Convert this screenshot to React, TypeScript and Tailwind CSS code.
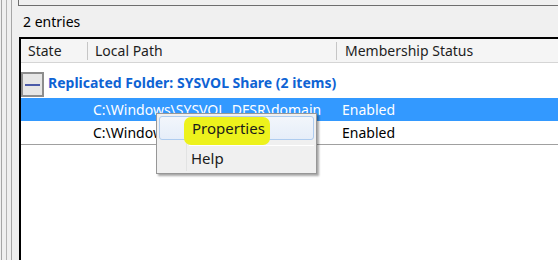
import React from "react"

const font = { fontFamily: '"Noto Sans", "Open Sans", sans-serif' }

function LeftRails() {
  return (
    <div className="flex h-full w-[18px] shrink-0">
      <span className="ml-[1px] w-px h-full bg-[#a6a6a6]" />
      <span className="ml-[4px] w-px h-full bg-[#b4b4b4]" />
      <span className="ml-[4px] w-px h-full bg-[#a6a6a6]" />
    </div>
  )
}

function ContextMenu() {
  return (
    <div className="absolute left-[156px] top-[113px] w-[161px] h-[61px] bg-[#f0f0f0] border border-[#979797] shadow-[2px_2px_2px_rgba(0,0,0,0.35)]">
      <div className="absolute left-[29px] top-[2px] bottom-[2px] w-px bg-[#e2e3e3]" />
      <div className="flex flex-col pt-[2px] px-[2px]">
        <div className="relative h-[24px] rounded-[3px] border border-[#aeccef] bg-gradient-to-b from-[#f2f6fb] to-[#e6eef9] flex items-center">
          <div className="absolute left-[24px] top-[0px] w-[86px] h-[28px] rounded-[7px] bg-[#edf21c]" />
          <span className="relative pl-[32px] text-[15px] text-[#1b1b1b]">Properties</span>
        </div>
        <div className="ml-[30px] mt-[5px] h-px bg-[#d7d7d7] border-b border-white" />
        <div className="h-[25px] flex items-center">
          <span className="pl-[32px] text-[15px] text-[#1b1b1b]">Help</span>
        </div>
      </div>
    </div>
  )
}

export default function App() {
  return (
    <div className="relative w-[558px] h-[260px] overflow-hidden bg-[#f0f0f0] flex" style={font}>
      <LeftRails />
      <div className="flex-1 flex flex-col">
        <div className="h-[6px] border-l border-b border-[#6e6e6e]" />
        <div className="h-[31px] pl-[5px] flex items-center text-[14px] text-black">2 entries</div>
        <div className="flex-1 ml-px border-t-2 border-l-2 border-black bg-white flex flex-col">
          <div className="h-[24px] flex items-center bg-[#f5f5f5] border-b border-[#d5d5d5] text-[14px] text-[#1e1e1e]">
            <div className="w-[67px] h-[18px] pl-[7px] border-r border-[#c6c6c6] flex items-center">State</div>
            <div className="w-[249px] h-[18px] pl-[7px] border-r border-[#c6c6c6] flex items-center">Local Path</div>
            <div className="pl-[8px] flex items-center">Membership Status</div>
          </div>
          <div className="h-[35px] flex items-end pb-[1px]">
            <div className="w-[23px] h-[25px] border-2 border-[#8d8d8d] bg-[#e6e6e6] flex items-center justify-center">
              <span className="w-[15px] h-[2px] bg-[#4a5aa8]" />
            </div>
            <span className="ml-[4px] mb-[4px] text-[14px] font-bold text-[#0e63d4]">Replicated Folder: SYSVOL Share (2 items)</span>
          </div>
          <div className="h-[23px] flex items-center bg-[#3399ff] text-white text-[14px]">
            <span className="w-[321px] pl-[72px]">C:\Windows\SYSVOL_DFSR\domain</span>
            <span>Enabled</span>
          </div>
          <div className="h-[24px] flex items-center border-b border-[#a0a0a0] text-black text-[14px]">
            <span className="w-[321px] pl-[72px]">C:\Windows\SYSVOL\domain</span>
            <span>Enabled</span>
          </div>
        </div>
      </div>
      <ContextMenu />
    </div>
  )
}
